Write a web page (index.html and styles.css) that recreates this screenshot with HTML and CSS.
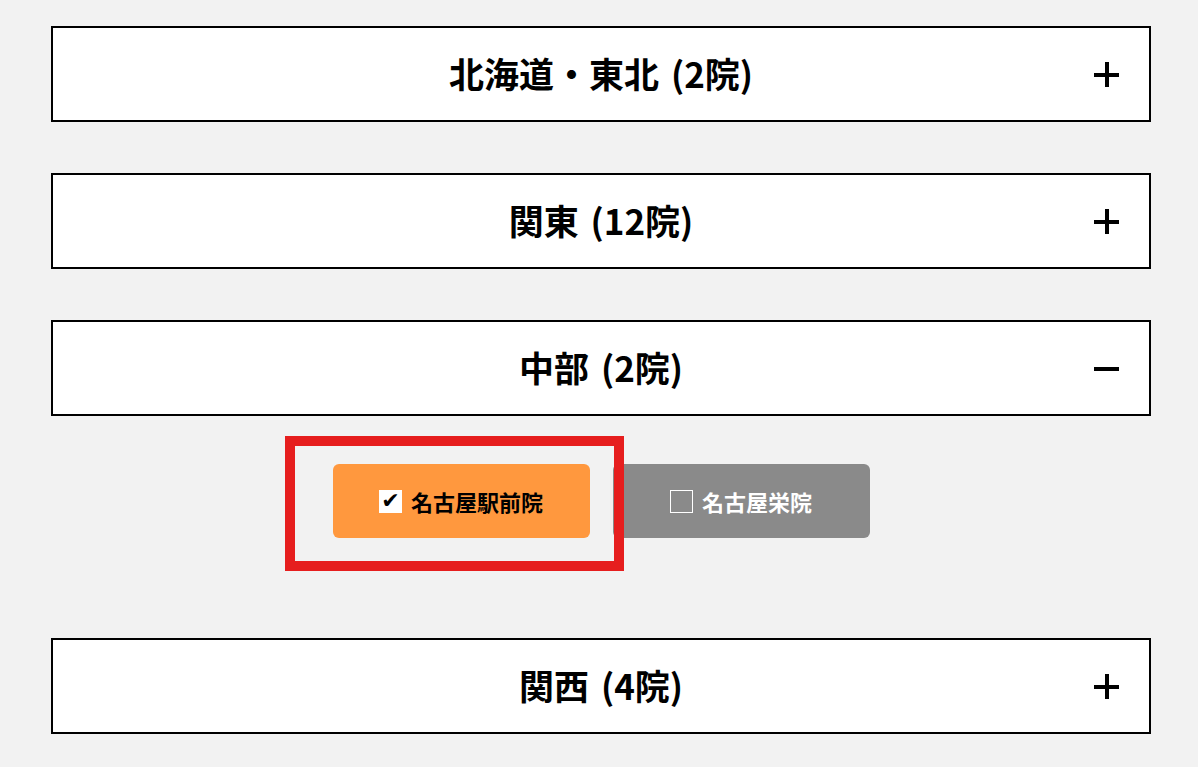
FILE: index.html
```html
<!DOCTYPE html>
<html lang="ja">
<head>
  <meta charset="UTF-8" />
  <meta name="viewport" content="width=device-width, initial-scale=1.0"/>
  <title>院を選択</title>
  <link rel="stylesheet" href="styles.css">
</head>
<body>

  <div class="areas">
    <div class="area">
      <div class="area-head">
        <span class="area-title">北海道・東北 (2院)</span>
        <span class="toggle plus"></span>
      </div>
    </div>

    <div class="area">
      <div class="area-head">
        <span class="area-title">関東 (12院)</span>
        <span class="toggle plus"></span>
      </div>
    </div>

    <div class="area open">
      <div class="area-head">
        <span class="area-title">中部 (2院)</span>
        <span class="toggle"></span>
      </div>
      <div class="area-body">
        <label class="clinic checked"><span class="box">✔</span>名古屋駅前院</label>
        <label class="clinic"><span class="box"></span>名古屋栄院</label>
        <div class="highlight"></div>
      </div>
    </div>

    <div class="area">
      <div class="area-head">
        <span class="area-title">関西 (4院)</span>
        <span class="toggle plus"></span>
      </div>
    </div>
  </div>

</body>
</html>
```

FILE: styles.css
```css
body {
  margin: 0;
  background: #f2f2f2;
  font-family: 'Noto Sans CJK JP', 'Noto Sans', sans-serif;
  color: #000;
}
.areas {
  width: 1100px;
  margin: 26px 0 0 51px;
}
.area {
  margin-bottom: 51px;
}
.area-head {
  position: relative;
  height: 96px;
  box-sizing: border-box;
  border: 2px solid #000;
  background: #fff;
  display: flex;
  align-items: center;
  justify-content: center;
}
.area-title {
  font-size: 35px;
  font-weight: 700;
  line-height: 1;
  margin-top: -3px;
  word-spacing: 4px;
}
.toggle {
  position: absolute;
  right: 30px;
  top: 50%;
  width: 25px;
  height: 25px;
  margin-top: -12px;
}
.toggle::before,
.toggle::after {
  content: "";
  position: absolute;
  background: #000;
}
.toggle::before {
  left: 0;
  right: 0;
  top: 11px;
  height: 4px;
}
.plus::after {
  top: 0;
  bottom: 0;
  left: 11px;
  width: 4px;
}
.area-body {
  position: relative;
  display: flex;
  justify-content: center;
  gap: 23px;
  padding: 48px 0 49px;
}
.clinic {
  width: 257px;
  height: 74px;
  border-radius: 6px;
  background: #8a8a8a;
  color: #fff;
  display: flex;
  align-items: center;
  justify-content: center;
  gap: 9px;
  font-size: 22px;
  font-weight: 700;
}
.clinic.checked {
  background: #ff983e;
  color: #000;
}
.box {
  width: 23px;
  height: 23px;
  box-sizing: border-box;
  border: 1.5px solid #fff;
  display: flex;
  align-items: center;
  justify-content: center;
  font-family: 'DejaVu Sans', sans-serif;
  font-size: 22px;
  font-weight: 400;
  line-height: 1;
}
.checked .box {
  background: #fff;
  color: #000;
}
.highlight {
  position: absolute;
  left: 234px;
  top: 20px;
  width: 339px;
  height: 135px;
  box-sizing: border-box;
  border: 10px solid #e61e1e;
}
```
